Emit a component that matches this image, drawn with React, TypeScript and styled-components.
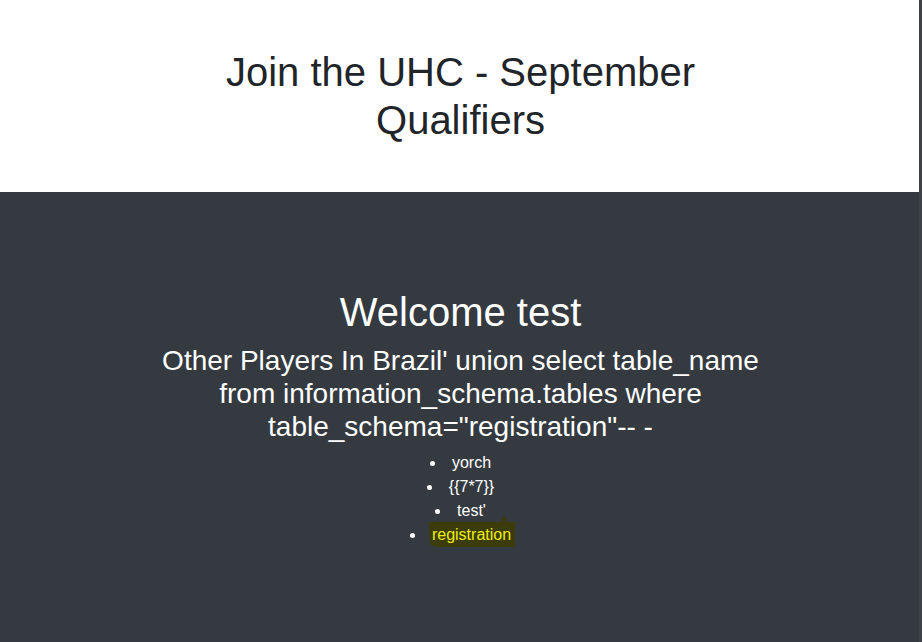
import React from "react";
import styled, { createGlobalStyle } from "styled-components";

const Global = createGlobalStyle`
  html, body { margin: 0; padding: 0; background: #3e4247; }
  body { font-family: "Liberation Sans", Arial, sans-serif; }
  #root { width: 919px; min-height: 642px; background: #343a40; }
`;

const Page = styled.div`
  display: flex;
  flex-direction: column;
  min-height: 642px;
`;

const Header = styled.header`
  background: #ffffff;
  padding: 48px 0 48px 2px;
  display: flex;
  justify-content: center;
`;

const Title = styled.h1`
  margin: 0;
  max-width: 620px;
  text-align: center;
  font-size: 40px;
  line-height: 48px;
  font-weight: 400;
  color: #212529;
`;

const Main = styled.main`
  flex: 1;
  background: #343a40;
  padding: 96px 0 0 2px;
  display: flex;
  flex-direction: column;
  align-items: center;
  color: #ffffff;
  text-align: center;
`;

const Welcome = styled.h1`
  margin: 0 0 8px;
  font-size: 40px;
  line-height: 48px;
  font-weight: 400;
`;

const Sub = styled.h3`
  margin: 0 0 8px;
  max-width: 620px;
  font-size: 28px;
  line-height: 33px;
  font-weight: 400;
`;

const List = styled.ul`
  margin: 0;
  padding: 0;
  list-style: disc inside;
  font-size: 16px;
  line-height: 24px;
`;

const Item = styled.li``;

const MarkWrap = styled.span`
  position: relative;
`;

const Mark = styled.span`
  padding: 4px 4px 4px 3px;
  margin: 0 -4px 0 -3px;
  background: #3c3c0a;
  color: #eeee10;
  clip-path: polygon(0 0, 100% 0, 100% 100%, 8% 100%, 2% 90%, 0 60%);
`;

const Notch = styled.span`
  position: absolute;
  top: -9px;
  right: 5px;
  width: 4px;
  height: 6px;
  background: #3c3c0a;
`;

export default function App() {
  return (
    <>
      <Global />
      <Page>
        <Header>
          <Title>Join the UHC - September Qualifiers</Title>
        </Header>
        <Main>
          <Welcome>Welcome test</Welcome>
          <Sub>
            Other Players In Brazil' union select table_name from
            information_schema.tables where
            table_schema="registration"-- -
          </Sub>
          <List>
            <Item>yorch</Item>
            <Item>{"{{7*7}}"}</Item>
            <Item>test'</Item>
            <Item>
              <MarkWrap>
                <Mark>registration</Mark>
                <Notch />
              </MarkWrap>
            </Item>
          </List>
        </Main>
      </Page>
    </>
  );
}
